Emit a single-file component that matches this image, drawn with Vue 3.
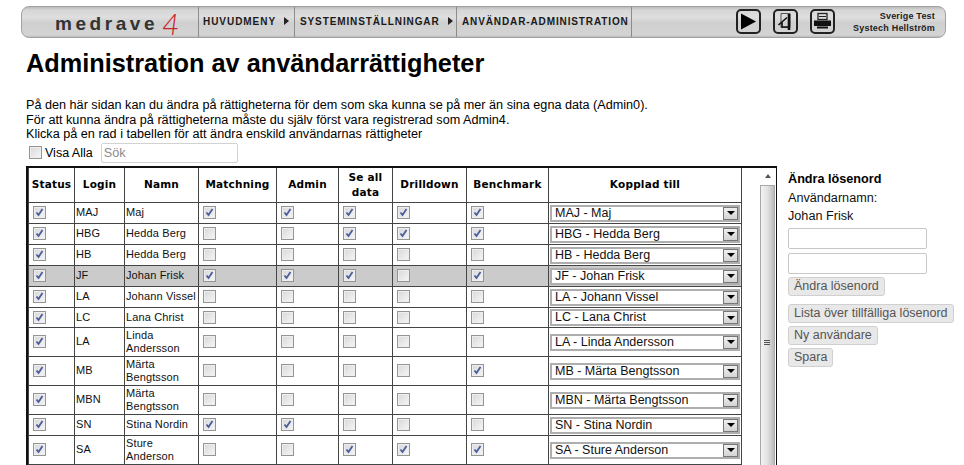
<script setup>
const columns = [
  { label: 'Status', cls: 'c-status' },
  { label: 'Login', cls: 'c-login' },
  { label: 'Namn', cls: 'c-name' },
  { label: 'Matchning', cls: 'c-match' },
  { label: 'Admin', cls: 'c-admin' },
  { label: 'Se all data', cls: 'c-all' },
  { label: 'Drilldown', cls: 'c-drill' },
  { label: 'Benchmark', cls: 'c-bench' },
  { label: 'Kopplad till', cls: 'c-link' }
]
const rows = [
  { login: 'MAJ', name: 'Maj', flags: [1, 1, 1, 1, 1, 1], h: 21 },
  { login: 'HBG', name: 'Hedda Berg', flags: [1, 0, 0, 1, 1, 1], h: 21 },
  { login: 'HB', name: 'Hedda Berg', flags: [1, 0, 0, 0, 0, 0], h: 21 },
  { login: 'JF', name: 'Johan Frisk', flags: [1, 1, 1, 1, 0, 1], h: 21, active: true },
  { login: 'LA', name: 'Johann Vissel', flags: [1, 0, 0, 0, 0, 0], h: 21 },
  { login: 'LC', name: 'Lana Christ', flags: [1, 0, 0, 0, 0, 0], h: 20 },
  { login: 'LA', name: 'Linda Andersson', flags: [1, 0, 0, 0, 0, 0], h: 29 },
  { login: 'MB', name: 'Märta Bengtsson', flags: [1, 0, 0, 0, 0, 1], h: 29 },
  { login: 'MBN', name: 'Märta Bengtsson', flags: [1, 0, 0, 0, 0, 0], h: 29 },
  { login: 'SN', name: 'Stina Nordin', flags: [1, 1, 1, 0, 0, 0], h: 21 },
  { login: 'SA', name: 'Sture Anderson', flags: [1, 0, 0, 1, 1, 1], h: 29 }
]
</script>

<template>
  <div class="page">
    <header class="topbar">
      <div class="logo"><span class="logo-word">medrave</span><span class="logo-num">4</span></div>
      <nav class="crumbs">
        <a class="crumb crumb-1">HUVUDMENY<i class="tri"></i></a>
        <a class="crumb crumb-2">SYSTEMINSTÄLLNINGAR<i class="tri"></i></a>
        <a class="crumb crumb-3">ANVÄNDAR-ADMINISTRATION</a>
      </nav>
      <div class="tools">
        <span class="tool">
          <svg width="25" height="25" viewBox="0 0 25 25"><rect x="1" y="1" width="23" height="23" rx="4" fill="none" stroke="#222" stroke-width="2"/><path d="M5 4.5 L20 12.5 L5 20.5 Z" fill="#000"/></svg>
        </span>
        <span class="tool">
          <svg width="25" height="25" viewBox="0 0 25 25"><rect x="1" y="1" width="23" height="23" rx="4" fill="none" stroke="#222" stroke-width="2"/><path d="M8 4.5 H17 V18.5 H8 Z" fill="none" stroke="#555" stroke-width="1"/><path d="M16 5 V21" stroke="#111" stroke-width="2.6"/><path d="M5.5 16 L14 8.5 M9 12.5 V18 H15" fill="none" stroke="#111" stroke-width="1.6"/></svg>
        </span>
        <span class="tool">
          <svg width="25" height="25" viewBox="0 0 25 25"><rect x="1" y="1" width="23" height="23" rx="4" fill="none" stroke="#222" stroke-width="2"/><rect x="8" y="4.5" width="9" height="6" fill="none" stroke="#222" stroke-width="1.3"/><path d="M9 7.5 H16" stroke="#222"/><path d="M4 11.5 H21 V17 H4 Z" fill="#111"/><path d="M7 18.5 H18" stroke="#111" stroke-width="2"/></svg>
        </span>
      </div>
      <div class="account"><div>Sverige Test</div><div>Systech Hellström</div></div>
    </header>

    <h1 class="title">Administration av användarrättigheter</h1>

    <div class="intro">
      <p>På den här sidan kan du ändra på rättigheterna för dem som ska kunna se på mer än sina egna data (Admin0).</p>
      <p>För att kunna ändra på rättigheterna måste du själv först vara registrerad som Admin4.</p>
      <p>Klicka på en rad i tabellen för att ändra enskild användarnas rättigheter</p>
    </div>

    <div class="filter">
      <span class="cb"></span>
      <span class="filter-label">Visa Alla</span>
      <input class="search" placeholder="Sök" />
    </div>

    <div class="content">
      <div class="table-box">
        <table class="grid">
          <thead>
            <tr>
              <th v-for="c in columns" :key="c.label" :class="c.cls">{{ c.label }}</th>
            </tr>
          </thead>
          <tbody>
            <tr v-for="(r, i) in rows" :key="i" :class="{ active: r.active }" :style="{ height: r.h + 'px' }">
              <td class="cbcell">
                <span class="cb" :class="{ on: r.flags[0] }"><svg v-if="r.flags[0]" width="11" height="11" viewBox="0 0 11 11"><path d="M2.5 5.5 L4.5 8 L8.5 2" fill="none" stroke="#4a5c9c" stroke-width="1.8"/></svg></span>
              </td>
              <td>{{ r.login }}</td>
              <td class="name">{{ r.name }}</td>
              <td v-for="n in 5" :key="n" class="cbcell">
                <span class="cb" :class="{ on: r.flags[n] }"><svg v-if="r.flags[n]" width="11" height="11" viewBox="0 0 11 11"><path d="M2.5 5.5 L4.5 8 L8.5 2" fill="none" stroke="#4a5c9c" stroke-width="1.8"/></svg></span>
              </td>
              <td class="selcell">
                <div class="sel"><span class="sel-text">{{ r.login }} - {{ r.name }}</span><span class="sel-btn"><i></i></span></div>
              </td>
            </tr>
          </tbody>
        </table>
        <div class="scrollbar">
          <div class="sb-up"><i></i></div>
          <div class="sb-thumb"><span class="grip"></span></div>
        </div>
      </div>

      <aside class="side">
        <h3>Ändra lösenord</h3>
        <div class="side-line first">Användarnamn:</div>
        <div class="side-line">Johan Frisk</div>
        <input class="pw" type="password" />
        <input class="pw" type="password" />
        <button class="btn b-first">Ändra lösenord</button>
        <button class="btn">Lista över tillfälliga lösenord</button>
        <button class="btn">Ny användare</button>
        <button class="btn">Spara</button>
      </aside>
    </div>
  </div>
</template>

<style>
html, body { margin: 0; overflow: hidden; background: #fff; }
</style>

<style scoped>
.page {
  height: 465px;
  overflow: hidden;
  box-sizing: border-box;
  padding: 6px 0 0 21px;
  font-family: "Liberation Sans", Arial, sans-serif;
  color: #000;
}
.topbar {
  width: 925px;
  height: 32px;
  box-sizing: border-box;
  display: flex;
  align-items: stretch;
  border: 1px solid #a2a2a2;
  border-radius: 8px;
  background: linear-gradient(#b9b9b9 0, #d6d6d6 3px, #dedede 10px, #cfcfcf 16px, #d4d4d4 28px, #bcbcbc 100%);
  position: relative;
}
.logo {
  width: 176px;
  box-sizing: border-box;
  padding-left: 33px;
  display: flex;
  align-items: center;
  white-space: nowrap;
}
.logo-word {
  font-size: 19px;
  font-weight: bold;
  letter-spacing: 3.55px;
  color: #333;
  margin-top: 3px;
}
.logo-num {
  font-family: Lato, "Liberation Sans", sans-serif;
  font-style: italic;
  font-weight: 300;
  font-size: 30px;
  color: #c8222a;
  margin-left: 4px;
  margin-top: 1px;
}
.crumbs { display: flex; }
.crumb {
  display: flex;
  align-items: center;
  box-sizing: border-box;
  padding-left: 4px;
  border-left: 1px solid #8c8c8c;
  font-size: 10px;
  font-weight: bold;
  letter-spacing: 0.88px;
  color: #1a1a1a;
  white-space: nowrap;
  padding-bottom: 2px;
}
.crumb-1 { width: 96px; letter-spacing: 0.95px; }
.crumb-2 { width: 162px; padding-left: 5px; }
.crumb-3 { width: 176px; padding-left: 5px; border-right: 1px solid #8c8c8c; }
.tri {
  display: inline-block;
  margin-left: 8px;
  width: 0; height: 0;
  border-left: 5px solid #222;
  border-top: 4px solid transparent;
  border-bottom: 4px solid transparent;
}
.tools {
  display: flex;
  gap: 12px;
  margin-left: 104px;
  align-items: flex-start;
  padding-top: 2px;
}
.tool { display: block; width: 25px; height: 25px; }
.account {
  margin-left: auto;
  padding: 3px 10px 0 0;
  text-align: right;
  font-size: 9px;
  font-weight: bold;
  line-height: 12px;
  letter-spacing: 0.2px;
  color: #222;
}
.title {
  margin: 10px 0 0 5px;
  font-size: 25.3px;
  line-height: 30px;
  font-weight: bold;
}
.intro { margin: 20px 0 0 5px; font-size: 12.65px; line-height: 14.5px; }
.intro p { margin: 0; white-space: nowrap; }
.filter {
  margin: 0 0 0 8px;
  height: 22px;
  display: flex;
  align-items: center;
}
.filter-label { font-size: 12.5px; margin-left: 3px; }
.search {
  margin-left: 8px;
  width: 137px;
  height: 20px;
  box-sizing: border-box;
  border: 1px solid #d2d2d2;
  border-radius: 2px;
  padding: 0 2px;
  font: 12.65px "Liberation Sans", Arial, sans-serif;
  outline: none;
}
.search::placeholder { color: #8c8c8c; opacity: 1; }
.content { display: flex; margin: 2px 0 0 5px; align-items: flex-start; }
.table-box {
  width: 751px;
  height: 320px;
  box-sizing: border-box;
  border: 2px solid #111;
  border-right-width: 1px;
  display: flex;
  justify-content: space-between;
  flex: none;
}
.grid {
  width: 714px;
  table-layout: fixed;
  border-collapse: collapse;
  height: max-content;
  font-size: 11px;
  letter-spacing: 0.12px;
  color: #111;
}
.grid th, .grid td { border: 1px solid #444; padding: 0; }
.grid th {
  height: 34px;
  border-top: 0;
  font-family: "DejaVu Sans", sans-serif;
  font-size: 10.5px;
  font-weight: bold;
  line-height: 15px;
  letter-spacing: 0.2px;
  color: #000;
  text-align: center;
}
.c-status { width: 45px; }
.c-login { width: 49px; }
.c-name { width: 73px; }
.c-match { width: 77px; }
.c-admin { width: 61px; }
.c-all { width: 53px; }
.c-drill { width: 73px; }
.c-bench { width: 81px; }
.grid td { padding-left: 1px; line-height: 13px; }
.cbcell { line-height: 0 !important; padding-left: 4px !important; }
.cb {
  display: inline-block;
  box-sizing: border-box;
  width: 13px;
  height: 13px;
  border: 1px solid #959595;
  background: linear-gradient(135deg, #d8d8d8, #f6f6f6);
  box-shadow: inset 0 0 0 1px #eee;
  vertical-align: middle;
  position: relative;
  flex: none;
}
.cb svg { position: absolute; left: 0; top: 0; }
.active td { background: #cbcbcb; }
.selcell { padding: 0 !important; }
.sel {
  height: 17px;
  box-sizing: border-box;
  border: 2px solid #aeaeae;
  background: #fff;
  display: flex;
  align-items: center;
  justify-content: space-between;
  margin: 1px auto 0;
  width: 190px;
  overflow: hidden;
}
.sel-text {
  font-size: 12.5px;
  letter-spacing: 0;
  padding-left: 3px;
  white-space: nowrap;
  color: #111;
}
.sel-btn {
  width: 15px;
  height: 13px;
  box-sizing: border-box;
  border: 1px solid #777;
  background: linear-gradient(#f0f0f0, #d4d4d4);
  display: flex;
  align-items: center;
  justify-content: center;
}
.sel-btn i {
  width: 0; height: 0;
  border-top: 4px solid #000;
  border-left: 4px solid transparent;
  border-right: 4px solid transparent;
}
.scrollbar {
  width: 15px;
  margin-right: 1px;
  display: flex;
  flex-direction: column;
  flex: none;
}
.sb-up { height: 17px; display: flex; align-items: center; justify-content: center; }
.sb-up i {
  width: 0; height: 0;
  border-bottom: 4px solid #555;
  border-left: 3.5px solid transparent;
  border-right: 3.5px solid transparent;
}
.sb-thumb {
  flex: 1;
  box-sizing: border-box;
  border: 1px solid #a8a8a8;
  background: linear-gradient(90deg, #f2f2f2, #e4e4e4 45%, #bcbcbc);
  position: relative;
}
.grip {
  position: absolute;
  left: 3px;
  top: 154px;
  width: 6px;
  height: 6px;
  background: repeating-linear-gradient(#555 0 1px, transparent 1px 2px);
}
.side {
  margin-left: 11px;
  margin-top: 6px;
  font-size: 12.65px;
  width: 170px;
  display: flex;
  flex-direction: column;
  align-items: flex-start;
  color: #111;
}
.side h3 { margin: 0; font-size: 12.65px; line-height: 15px; font-weight: bold; color: #000; }
.side-line { line-height: 15px; margin-top: 3px; }
.side-line.first { margin-top: 4px; }
.pw {
  width: 139px;
  height: 21px;
  box-sizing: border-box;
  border: 1px solid #c8c8c8;
  border-radius: 2px;
  margin: 0 0 4px;
  padding: 0 2px;
  outline: none;
}
.side-line + .pw { margin-top: 4px; }
.pw + .pw { margin-bottom: 3px; }
.btn {
  height: 19px;
  box-sizing: border-box;
  border: 1px solid #d0d0d0;
  border-radius: 3px;
  background: #e8e8e8;
  color: #555;
  padding: 0 5px;
  font: 12.5px "Liberation Sans", Arial, sans-serif;
  margin-bottom: 3px;
  white-space: nowrap;
}
.b-first { margin-bottom: 8px; }
</style>
